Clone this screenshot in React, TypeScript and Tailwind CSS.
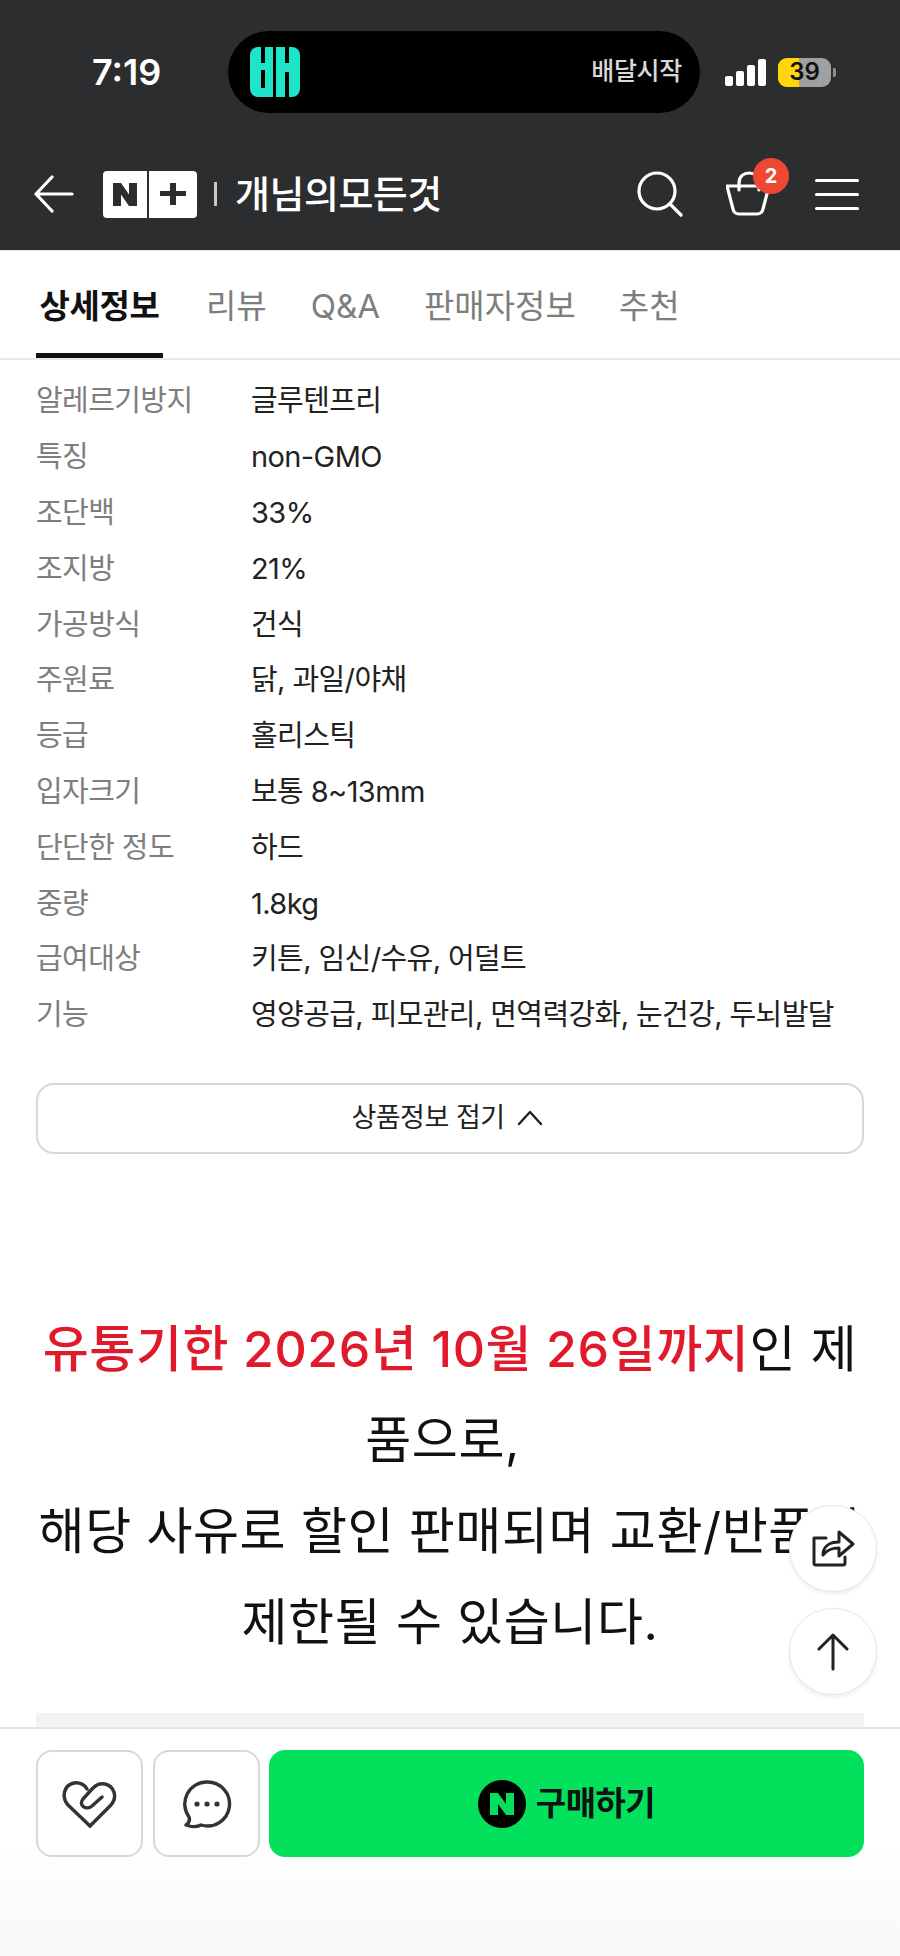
import React from "react";

const FONT = "font-['Inter','Noto_Sans_CJK_KR',sans-serif]";

const rows: [string, string][] = [
  ["알레르기방지", "글루텐프리"],
  ["특징", "non-GMO"],
  ["조단백", "33%"],
  ["조지방", "21%"],
  ["가공방식", "건식"],
  ["주원료", "닭, 과일/야채"],
  ["등급", "홀리스틱"],
  ["입자크기", "보통 8~13mm"],
  ["단단한 정도", "하드"],
  ["중량", "1.8kg"],
  ["급여대상", "키튼, 임신/수유, 어덜트"],
  ["기능", "영양공급, 피모관리, 면역력강화, 눈건강, 두뇌발달"],
];

function Header() {
  return (
    <header className="h-[251px] shrink-0 bg-[#2c2d2f] border-b border-[#e4e4e4] flex flex-col">
      <div className="h-[82px] mt-[31px] shrink-0 flex items-center relative">
        <span className="w-[228px] pl-[92px] text-[36px] font-semibold text-white leading-none">7:19</span>
        <div className="w-[472px] h-[82px] rounded-[41px] bg-black flex items-center justify-between pl-[22px] pr-[18px]">
          <svg width="50" height="50" viewBox="0 0 50 50">
            <rect width="50" height="50" rx="8" fill="#1fe5c8" />
            <rect x="23" y="0" width="3" height="50" fill="#000" />
            <rect x="11" y="0" width="4" height="16" fill="#000" />
            <rect x="11" y="23" width="4" height="18" fill="#000" />
            <rect x="35" y="0" width="4" height="16" fill="#000" />
            <rect x="35" y="25" width="4" height="25" fill="#000" />
          </svg>
          <span className="text-[25px] font-medium text-[#d9d9d9] tracking-[-0.3px]">배달시작</span>
        </div>
        <div className="flex items-end gap-[3px] ml-[25px] h-[27px]">
          <span className="w-[8px] h-[10px] rounded-[2px] bg-white" />
          <span className="w-[8px] h-[15px] rounded-[2px] bg-white" />
          <span className="w-[8px] h-[21px] rounded-[2px] bg-white" />
          <span className="w-[8px] h-[27px] rounded-[2px] bg-white" />
        </div>
        <div className="ml-[12px] w-[53px] h-[29px] rounded-[9px] overflow-hidden relative flex bg-[#a0a0a0]">
          <span className="w-[21px] h-full bg-[#ffd60a]" />
          <span className="absolute inset-0 flex items-center justify-center text-[24px] font-semibold text-[#111] leading-none">39</span>
        </div>
        <span className="ml-[2px] w-[3px] h-[9px] rounded-r-[2px] bg-[#8e8e8e]" />
      </div>
      <div className="flex-1 flex items-center relative pt-[25px]">
        <svg className="ml-[34px]" width="40" height="38" viewBox="0 0 40 38" fill="none" stroke="#fff" strokeWidth="3.2" strokeLinecap="round" strokeLinejoin="round">
          <path d="M38 19H2M18 2 2 19l16 17" />
        </svg>
        <div className="ml-[29px] w-[94px] h-[47px] rounded-[4px] bg-white flex">
          <div className="w-[46px] h-full flex items-center justify-center border-r-[2px] border-[#2c2d2f]">
            <svg width="24" height="23" viewBox="0 0 24 23"><path d="M0 0h8l8 11.500V0h8v23h-8L8 11.500V23H0z" fill="#2c2d2f" /></svg>
          </div>
          <div className="flex-1 flex items-center justify-center">
            <svg width="26" height="22" viewBox="0 0 26 22"><path d="M10 0h6v8h10v5H16v9h-6v-9H0V8h10z" fill="#2c2d2f" /></svg>
          </div>
        </div>
        <span className="ml-[17px] w-[3px] h-[24px] bg-[#c9c9c9]" />
        <span className="ml-[18px] text-[38px] font-medium text-white leading-none tracking-[-0.5px]">개님의모든것</span>
        <div className="ml-auto mr-[41px] flex items-center">
          <svg width="46" height="46" viewBox="0 0 46 46" fill="none" stroke="#fff" strokeWidth="3.2" strokeLinecap="round">
            <circle cx="20" cy="20" r="18" />
            <path d="M33 33 44 44" />
          </svg>
          <div className="relative ml-[43px] w-[44px] h-[46px]">
            <svg width="46" height="46" viewBox="0 0 46 46" fill="none" stroke="#fff" strokeWidth="3.2" strokeLinecap="round" strokeLinejoin="round">
              <path d="M1 15h42l-6 23a6 6 0 0 1-6 5H13a6 6 0 0 1-6-5z" />
              <path d="M13 19V12C13 5 18 2 23 2s10 3 10 10v7" />
            </svg>
            <span className="absolute -top-[13px] left-[27px] w-[36px] h-[36px] rounded-full bg-[#f04732] text-white text-[20px] font-bold flex items-center justify-center">2</span>
          </div>
          <div className="ml-[45px] w-[44px] flex flex-col gap-[11px]">
            <span className="h-[3px] bg-white rounded" />
            <span className="h-[3px] bg-white rounded" />
            <span className="h-[3px] bg-white rounded" />
          </div>
        </div>
      </div>
    </header>
  );
}

function Tabs() {
  return (
    <nav className="h-[109px] shrink-0 border-b-2 border-[#e8e8e8] bg-white flex pl-[36px] gap-[43px] text-[33px] text-[#7e7e7e] relative">
      <div className="relative h-[107px] flex items-center w-[127px] justify-center pt-[4px] text-[#111] font-bold tracking-[-0.3px]">
        상세정보
        <span className="absolute left-0 right-0 bottom-0 h-[5px] bg-[#111]" />
      </div>
      <div className="h-full flex items-center pt-[4px]">리뷰</div>
      <div className="h-full flex items-center pt-[4px] ml-[1px]">Q&amp;A</div>
      <div className="h-full flex items-center pt-[4px] ml-[1px]">판매자정보</div>
      <div className="h-full flex items-center pt-[4px]">추천</div>
    </nav>
  );
}

function BottomBar() {
  return (
    <footer className="h-[229px] shrink-0 border-t-2 border-[#e5e5e5] bg-gradient-to-b from-white via-white to-[#f8f8f8] flex gap-[9px] px-[36px] pt-[21px] items-start relative z-10">
      <button className="w-[107px] h-[107px] mr-[1px] rounded-[16px] border-2 border-[#d6d8db] flex items-center justify-center">
        <svg width="56" height="48" viewBox="0 0 56 48" fill="none" stroke="#333" strokeWidth="3.4" strokeLinecap="round" strokeLinejoin="round">
          <path d="M28 46 6 25C-1 17 2 5 12 3c6-1 11 2 13 6" />
          <path d="M28 46 49 25c7-8 3-19-6-21-6-1-9 1-13 5L21 19c-5 6 3 12 9 7l10-9" />
        </svg>
      </button>
      <button className="w-[107px] h-[107px] rounded-[16px] border-2 border-[#d6d8db] flex items-center justify-center">
        <svg width="50" height="50" viewBox="0 0 50 50" fill="none">
          <path d="M25 3a22 22 0 1 1-6 43c-4 2-10 2-15 0 3-2 4-5 3-8A22 22 0 0 1 25 3z" stroke="#333" strokeWidth="3.4" strokeLinejoin="round" />
          <circle cx="15" cy="25" r="2.6" fill="#333" />
          <circle cx="25" cy="25" r="2.6" fill="#333" />
          <circle cx="35" cy="25" r="2.6" fill="#333" />
        </svg>
      </button>
      <button className="flex-1 h-[107px] rounded-[16px] bg-[#03e05c] flex items-center justify-center gap-[10px]">
        <span className="w-[48px] h-[48px] rounded-full bg-black flex items-center justify-center">
          <svg width="24" height="22" viewBox="0 0 24 22"><path d="M0 0h8l8 11V0h8v22h-8L8 11v11H0z" fill="#03e05c" /></svg>
        </span>
        <span className="text-[33px] font-bold text-[#111] tracking-[-0.5px]">구매하기</span>
      </button>
    </footer>
  );
}

export default function App() {
  return (
    <div className={`${FONT} w-[900px] h-[1956px] bg-white flex flex-col overflow-hidden relative text-[#111]`}>
      <Header />
      <Tabs />
      <main className="flex-1 overflow-hidden px-[36px]">
        <div className="-mt-[43px]">
          <div className="h-[56px] pt-[2px] flex items-center text-[29px] pl-[215px] text-[#222] tracking-[-0.6px]">캐나다((주)뉴트리)</div>
          {rows.map(([k, v]) => (
            <div key={k} className="h-[55.8px] flex items-center text-[29px] leading-none tracking-[-0.6px]">
              <span className="w-[215px] shrink-0 text-[#7e7e7e]">{k}</span>
              <span className="text-[#222] whitespace-nowrap">{v}</span>
            </div>
          ))}
        </div>
        <button className="mt-[40px] w-full h-[71px] rounded-[18px] border-2 border-[#d6d8db] flex items-center justify-center gap-[12px] pr-[6px] text-[27px] text-[#222] tracking-[-0.5px]">
          상품정보 접기
          <svg width="26" height="16" viewBox="0 0 26 16" fill="none" stroke="#222" strokeWidth="2.4" strokeLinecap="round" strokeLinejoin="round">
            <path d="M2 14 13 2l11 12" />
          </svg>
        </button>
        <div className="mt-[150px] text-center text-[50px] leading-[91px] tracking-[0.6px] font-normal">
          <p className="text-[#111]"><span className="text-[#e01a2b] font-medium">유통기한 2026년 10월 26일까지</span>인 제품으로,{"\u00a0"}</p>
          <p className="text-[#111]">해당 사유로 할인 판매되며 교환/반품이 제한될 수 있습니다.</p>
        </div>
        <div className="mt-[45px] h-[20px] bg-[#f2f3f5]" />
      </main>
      <BottomBar />
      <button className="absolute left-[789px] top-[1505px] w-[88px] h-[87px] rounded-full bg-white border border-[#e8e8e8] shadow-[0_2px_4px_rgba(0,0,0,0.08)] flex items-center justify-center">
        <svg width="44" height="40" viewBox="0 0 44 40" fill="none" stroke="#222" strokeWidth="3" strokeLinecap="round" strokeLinejoin="round">
          <path d="M15 9H3v25a2 2 0 0 0 2 2h27a2 2 0 0 0 2-2v-6" />
          <path d="M12 26c0-9 7-13 16-13V3l14 12-14 12v-8c-8 0-12 2-16 7z" />
        </svg>
      </button>
      <button className="absolute left-[789px] top-[1608px] w-[88px] h-[87px] rounded-full bg-white border border-[#e8e8e8] shadow-[0_2px_4px_rgba(0,0,0,0.08)] flex items-center justify-center">
        <svg width="32" height="38" viewBox="0 0 32 38" fill="none" stroke="#222" strokeWidth="3" strokeLinecap="round" strokeLinejoin="round">
          <path d="M16 36V2M2 16 16 2l14 14" />
        </svg>
      </button>
    </div>
  );
}
